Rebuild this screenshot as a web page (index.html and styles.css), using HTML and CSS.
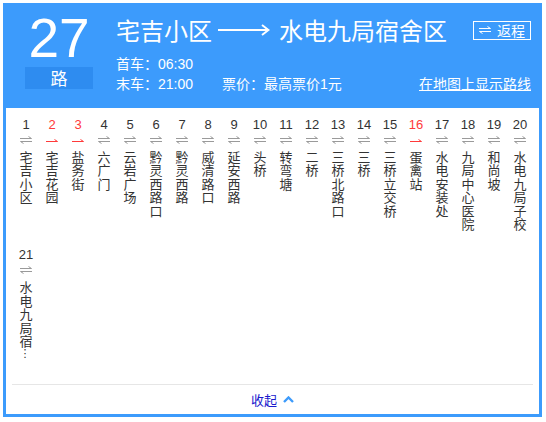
FILE: index.html
```html
<!DOCTYPE html>
<html lang="zh-CN">
<head>
<meta charset="utf-8">
<title>27路</title>
<link rel="stylesheet" href="styles.css">
</head>
<body>
<div class="card">
  <header class="head">
    <div class="num-col">
      <div class="num">27</div>
      <div class="lu">路</div>
    </div>
    <div class="info">
      <div class="title-row">
        <div class="title">
          <span>宅吉小区</span>
          <svg class="long-arrow" viewBox="0 0 52 12" width="52" height="12"><path d="M0 6H50" stroke="#fff" stroke-width="2" fill="none"/><path d="M44 1L50.5 6L44 11" stroke="#fff" stroke-width="2" fill="none"/></svg>
          <span>水电九局宿舍区</span>
        </div>
        <a class="back"><svg class="swap" viewBox="0 0 12 8" width="12" height="8"><path d="M0 2.5H11.5L8.5 0.5M12 5.5H0.5L3.5 7.5" stroke="#fff" stroke-width="1" fill="none"/></svg>返程</a>
      </div>
      <div class="meta first-meta"><span>首车：06:30</span></div>
      <div class="meta"><span class="col1">末车：21:00</span><span>票价：最高票价1元</span><a class="map-link">在地图上显示路线</a></div>
    </div>
  </header>

  <div class="stops">
    <div class="stop"><div class="no">1</div><svg class="ic" viewBox="0 0 12 8"><path d="M0 2.5H11.5L8.5 0.5M12 5.5H0.5L3.5 7.5"/></svg><div class="name">宅吉小区</div></div>
    <div class="stop red"><div class="no">2</div><svg class="ic" viewBox="0 0 12 8"><path d="M0 5.5H11.5L8.5 3.5"/></svg><div class="name">宅吉花园</div></div>
    <div class="stop red"><div class="no">3</div><svg class="ic" viewBox="0 0 12 8"><path d="M0 5.5H11.5L8.5 3.5"/></svg><div class="name">盐务街</div></div>
    <div class="stop"><div class="no">4</div><svg class="ic" viewBox="0 0 12 8"><path d="M0 2.5H11.5L8.5 0.5M12 5.5H0.5L3.5 7.5"/></svg><div class="name">六广门</div></div>
    <div class="stop"><div class="no">5</div><svg class="ic" viewBox="0 0 12 8"><path d="M0 2.5H11.5L8.5 0.5M12 5.5H0.5L3.5 7.5"/></svg><div class="name">云岩广场</div></div>
    <div class="stop"><div class="no">6</div><svg class="ic" viewBox="0 0 12 8"><path d="M0 2.5H11.5L8.5 0.5M12 5.5H0.5L3.5 7.5"/></svg><div class="name">黔灵西路口</div></div>
    <div class="stop"><div class="no">7</div><svg class="ic" viewBox="0 0 12 8"><path d="M0 2.5H11.5L8.5 0.5M12 5.5H0.5L3.5 7.5"/></svg><div class="name">黔灵西路</div></div>
    <div class="stop"><div class="no">8</div><svg class="ic" viewBox="0 0 12 8"><path d="M0 2.5H11.5L8.5 0.5M12 5.5H0.5L3.5 7.5"/></svg><div class="name">威清路口</div></div>
    <div class="stop"><div class="no">9</div><svg class="ic" viewBox="0 0 12 8"><path d="M0 2.5H11.5L8.5 0.5M12 5.5H0.5L3.5 7.5"/></svg><div class="name">延安西路</div></div>
    <div class="stop"><div class="no">10</div><svg class="ic" viewBox="0 0 12 8"><path d="M0 2.5H11.5L8.5 0.5M12 5.5H0.5L3.5 7.5"/></svg><div class="name">头桥</div></div>
    <div class="stop"><div class="no">11</div><svg class="ic" viewBox="0 0 12 8"><path d="M0 2.5H11.5L8.5 0.5M12 5.5H0.5L3.5 7.5"/></svg><div class="name">转弯塘</div></div>
    <div class="stop"><div class="no">12</div><svg class="ic" viewBox="0 0 12 8"><path d="M0 2.5H11.5L8.5 0.5M12 5.5H0.5L3.5 7.5"/></svg><div class="name">二桥</div></div>
    <div class="stop"><div class="no">13</div><svg class="ic" viewBox="0 0 12 8"><path d="M0 2.5H11.5L8.5 0.5M12 5.5H0.5L3.5 7.5"/></svg><div class="name">三桥北路口</div></div>
    <div class="stop"><div class="no">14</div><svg class="ic" viewBox="0 0 12 8"><path d="M0 2.5H11.5L8.5 0.5M12 5.5H0.5L3.5 7.5"/></svg><div class="name">三桥</div></div>
    <div class="stop"><div class="no">15</div><svg class="ic" viewBox="0 0 12 8"><path d="M0 2.5H11.5L8.5 0.5M12 5.5H0.5L3.5 7.5"/></svg><div class="name">三桥立交桥</div></div>
    <div class="stop red"><div class="no">16</div><svg class="ic" viewBox="0 0 12 8"><path d="M0 5.5H11.5L8.5 3.5"/></svg><div class="name">蛋禽站</div></div>
    <div class="stop"><div class="no">17</div><svg class="ic" viewBox="0 0 12 8"><path d="M0 2.5H11.5L8.5 0.5M12 5.5H0.5L3.5 7.5"/></svg><div class="name">水电安装处</div></div>
    <div class="stop"><div class="no">18</div><svg class="ic" viewBox="0 0 12 8"><path d="M0 2.5H11.5L8.5 0.5M12 5.5H0.5L3.5 7.5"/></svg><div class="name">九局中心医院</div></div>
    <div class="stop"><div class="no">19</div><svg class="ic" viewBox="0 0 12 8"><path d="M0 2.5H11.5L8.5 0.5M12 5.5H0.5L3.5 7.5"/></svg><div class="name">和尚坡</div></div>
    <div class="stop"><div class="no">20</div><svg class="ic" viewBox="0 0 12 8"><path d="M0 2.5H11.5L8.5 0.5M12 5.5H0.5L3.5 7.5"/></svg><div class="name">水电九局子校</div></div>
    <div class="stop"><div class="no">21</div><svg class="ic" viewBox="0 0 12 8"><path d="M0 2.5H11.5L8.5 0.5M12 5.5H0.5L3.5 7.5"/></svg><div class="name">水电九局宿<span class="dots">⋮</span></div></div>
  </div>

  <div class="sep"></div>
  <div class="foot"><span>收起</span><svg class="chev" viewBox="0 0 11 7" width="11" height="7"><path d="M1 6L5.5 1.5L10 6" stroke="#3d9bfb" stroke-width="2.4" fill="none"/></svg></div>
</div>
</body>
</html>
```

FILE: styles.css
```css
html, body {
  margin: 0;
  padding: 0;
  background: #fff;
}

body {
  font-family: "Liberation Sans", "Noto Sans CJK SC", sans-serif;
  color: #333;
}

.card {
  margin: 3px;
  width: 539px;
  box-sizing: border-box;
  border: 3px solid #3c9bfc;
  background: #fff;
}

.head {
  display: flex;
  height: 102px;
  box-sizing: border-box;
  padding: 5px 8px 0 19px;
  background: #3c9bfc;
  color: #fff;
}

.num-col {
  width: 68px;
  flex: none;
}

.num {
  font-size: 55px;
  line-height: 55px;
  text-align: center;
}

.lu {
  margin-top: 1px;
  height: 22px;
  line-height: 22px;
  background: #2e8cf0;
  text-align: center;
  font-size: 17px;
  font-family: "Noto Sans CJK SC", sans-serif;
}

.info {
  flex: 1;
  margin-left: 23px;
  padding-top: 4px;
}

.title-row {
  display: flex;
  align-items: center;
  justify-content: space-between;
  height: 30px;
}

.title {
  display: flex;
  align-items: center;
  font-size: 24px;
  line-height: 30px;
  font-family: "Noto Sans CJK SC", sans-serif;
}

.long-arrow {
  display: block;
  margin: 0 9px 0 6px;
}

.back {
  display: flex;
  align-items: center;
  gap: 6px;
  width: 58px;
  height: 19px;
  box-sizing: border-box;
  border: 1px solid #fff;
  padding-left: 5px;
  font-size: 14px;
  line-height: 17px;
  font-family: "Noto Sans CJK SC", sans-serif;
  color: #fff;
}

.swap {
  display: block;
}

.meta {
  display: flex;
  font-size: 14px;
  line-height: 20px;
}

.first-meta {
  margin-top: 9px;
}

.col1 {
  width: 106px;
  flex: none;
}

.map-link {
  margin-left: auto;
  color: #fff;
  text-decoration: underline;
}

.stops {
  display: grid;
  grid-template-columns: repeat(20, 26px);
  row-gap: 17px;
  align-items: start;
  padding: 9px 0 23px 7px;
}

.stop {
  display: flex;
  flex-direction: column;
  align-items: center;
}

.no {
  font-size: 13px;
  line-height: 16px;
  color: #333;
}

.ic {
  display: block;
  width: 12px;
  height: 8px;
  margin-top: 3px;
  stroke: #9a9a9a;
  stroke-width: 1;
  fill: none;
}

.red .no {
  color: #ff3a3a;
}

.red .ic {
  stroke: #ff3a3a;
}

.name {
  width: 13px;
  margin-top: 6px;
  font-size: 13px;
  line-height: 13.4px;
  word-break: break-all;
  font-family: "Noto Sans CJK SC", sans-serif;
  color: #333;
}

.dots {
  display: block;
  text-align: left;
  font-family: "DejaVu Sans", sans-serif;
  font-size: 11px;
}

.sep {
  height: 1px;
  margin: 0 6px;
  background: #e6e6e6;
}

.foot {
  display: flex;
  justify-content: center;
  align-items: center;
  gap: 6px;
  height: 29px;
  font-size: 13px;
  font-family: "Noto Sans CJK SC", sans-serif;
  color: #1a1acd;
}

.chev {
  display: block;
}
```
